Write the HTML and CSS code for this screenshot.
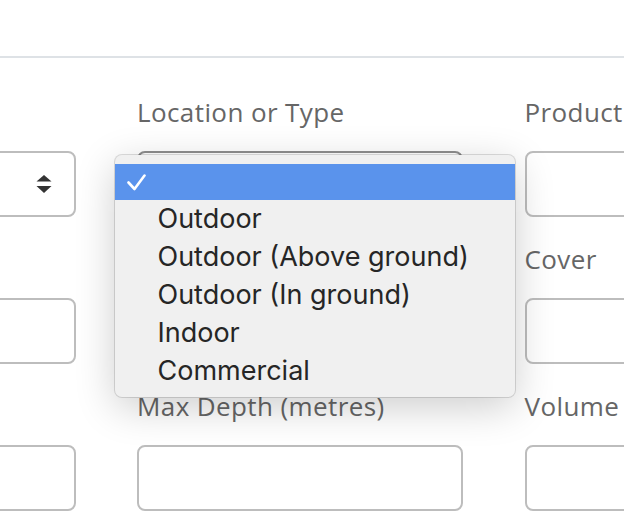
FILE: index.html
```html
<!DOCTYPE html>
<html lang="en">
<head>
    <meta charset="UTF-8">
    <meta name="viewport" content="width=device-width, initial-scale=1.0">
    <title>Pool Details</title>
    <link rel="stylesheet" href="styles.css">
</head>
<body>
    <div class="topbar"></div>
    <form class="pool-form">
        <div class="field">
            <label>Shape</label>
            <div class="select-box">
                <svg class="updown" width="16" height="20" viewBox="0 0 16 20">
                    <path d="M8 1 L15.5 7.5 L0.5 7.5 Z" fill="#333"/>
                    <path d="M0.5 12 L15.5 12 L8 19 Z" fill="#333"/>
                </svg>
            </div>
        </div>
        <div class="field">
            <label>Location or Type</label>
            <div class="select-box open"></div>
            <ul class="popup">
                <li class="selected">
                    <svg class="tick" width="20" height="20" viewBox="0 0 20 20">
                        <path d="M1.5 10.5 L7.5 17 L17.5 3.5" fill="none" stroke="#fff" stroke-width="2.6" stroke-linecap="round" stroke-linejoin="round"/>
                    </svg>
                </li>
                <li>Outdoor</li>
                <li>Outdoor (Above ground)</li>
                <li>Outdoor (In ground)</li>
                <li>Indoor</li>
                <li>Commercial</li>
            </ul>
        </div>
        <div class="field">
            <label>Product Name</label>
            <input type="text">
        </div>

        <div class="field">
            <label>Length (metres)</label>
            <input type="text">
        </div>
        <div class="field">
            <label>Width (metres)</label>
            <input type="text">
        </div>
        <div class="field">
            <label>Cover</label>
            <input type="text">
        </div>

        <div class="field">
            <label>Min Depth (metres)</label>
            <input type="text">
        </div>
        <div class="field">
            <label>Max Depth (metres)</label>
            <input type="text">
        </div>
        <div class="field">
            <label>Volume</label>
            <input type="text">
        </div>
    </form>
</body>
</html>
```

FILE: styles.css
```css
body {
    margin: 0;
    background: #fff;
    font-family: "Open Sans", Lato, sans-serif;
    overflow: hidden;
}
.topbar {
    height: 56px;
    border-bottom: 2px solid #dee2e6;
}
.pool-form {
    display: grid;
    grid-template-columns: 327px 326px 326px;
    column-gap: 61.5px;
    margin-left: -251.5px;
    padding-top: 39px;
}
.field {
    position: relative;
    margin-bottom: 27px;
}
.field label {
    display: block;
    font-size: 26px;
    line-height: 30px;
    letter-spacing: 0.4px;
    color: #666;
    margin-bottom: 24px;
    white-space: nowrap;
}
.field input,
.select-box {
    display: block;
    width: 100%;
    height: 66px;
    border: 2px solid #bdbdbd;
    border-radius: 8px;
    background: #fff;
    box-sizing: border-box;
    margin: 0;
    font-size: 24px;
}
.select-box {
    display: flex;
    align-items: center;
    justify-content: flex-end;
    padding-right: 22px;
}
.select-box.open {
    border-color: #8e8e8e;
}

/* native-looking popup list of the open select */
.popup {
    position: absolute;
    left: -22.5px;
    top: 58px;
    width: 400px;
    margin: 0;
    padding: 9px 0 7px;
    list-style: none;
    background: #f0f0f0;
    border-radius: 7px;
    box-shadow: 0 0 0 1px rgba(0, 0, 0, 0.13), 0 10px 40px rgba(0, 0, 0, 0.2);
    font-family: Inter, "Liberation Sans", sans-serif;
    font-size: 27px;
    color: #262626;
    z-index: 2;
}
.popup li {
    height: 38px;
    line-height: 38px;
    padding-left: 43px;
}
.popup li.selected {
    height: 36px;
    background: #5a93ec;
    padding-left: 0;
    display: flex;
    align-items: center;
}
.tick {
    margin-left: 12px;
}
```
